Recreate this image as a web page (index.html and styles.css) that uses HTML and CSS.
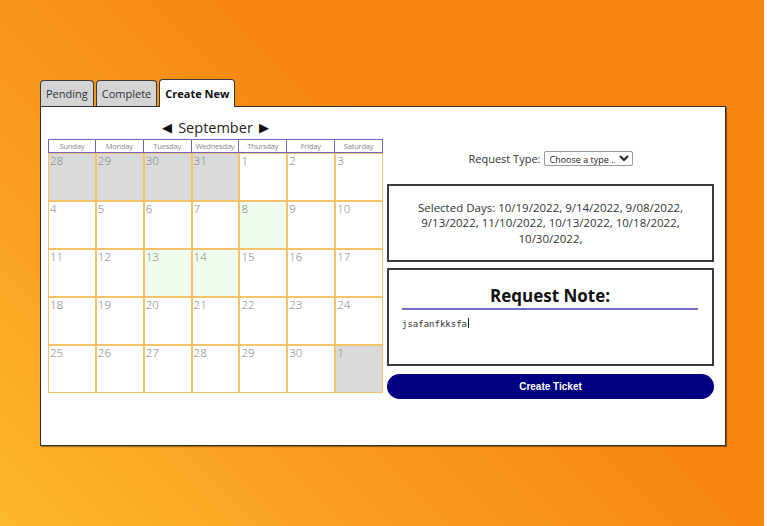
FILE: index.html
```html
<!DOCTYPE html>
<html lang="en">
<head>
    <meta charset="utf-8">
    <title>Tickets</title>
    <link rel="stylesheet" href="styles.css">
</head>
<body>
    <div class="screen">
        <div class="tabs">
            <button class="tab">Pending</button>
            <button class="tab">Complete</button>
            <button class="tab active">Create New</button>
        </div>

        <section class="panel">
            <!-- calendar -->
            <div class="calendar">
                <div class="month">
                    <span class="arrow">&#9664;</span>
                    <span class="month-name">September</span>
                    <span class="arrow">&#9654;</span>
                </div>
                <div class="weekdays">
                    <div class="weekday">Sunday</div>
                    <div class="weekday">Monday</div>
                    <div class="weekday">Tuesday</div>
                    <div class="weekday">Wednesday</div>
                    <div class="weekday">Thursday</div>
                    <div class="weekday">Friday</div>
                    <div class="weekday">Saturday</div>
                </div>
                <div class="days">
                    <div class="day other">28</div>
                    <div class="day other">29</div>
                    <div class="day other">30</div>
                    <div class="day other">31</div>
                    <div class="day">1</div>
                    <div class="day">2</div>
                    <div class="day">3</div>

                    <div class="day">4</div>
                    <div class="day">5</div>
                    <div class="day">6</div>
                    <div class="day">7</div>
                    <div class="day picked">8</div>
                    <div class="day">9</div>
                    <div class="day">10</div>

                    <div class="day">11</div>
                    <div class="day">12</div>
                    <div class="day picked">13</div>
                    <div class="day picked">14</div>
                    <div class="day">15</div>
                    <div class="day">16</div>
                    <div class="day">17</div>

                    <div class="day">18</div>
                    <div class="day">19</div>
                    <div class="day">20</div>
                    <div class="day">21</div>
                    <div class="day">22</div>
                    <div class="day">23</div>
                    <div class="day">24</div>

                    <div class="day">25</div>
                    <div class="day">26</div>
                    <div class="day">27</div>
                    <div class="day">28</div>
                    <div class="day">29</div>
                    <div class="day">30</div>
                    <div class="day other">1</div>
                </div>
            </div>

            <!-- request form -->
            <div class="request">
                <div class="type-row">
                    <label for="type">Request Type:</label>
                    <select id="type" class="type-select">
                        <option>Choose a type ...</option>
                    </select>
                </div>

                <div class="box selected">
                    Selected Days: 10/19/2022, 9/14/2022, 9/08/2022, 9/13/2022, 11/10/2022, 10/13/2022, 10/18/2022, 10/30/2022,
                </div>

                <div class="box note">
                    <div class="note-title">Request Note:</div>
                    <div class="note-text">jsafanfkksfa<span class="caret"></span></div>
                </div>

                <button class="create-btn">Create Ticket</button>
            </div>
        </section>
    </div>
</body>
</html>
```

FILE: styles.css
```css
/* base */
body {
    margin: 0;
    background: #ffffff;
    font-family: "Open Sans", "Noto Sans", sans-serif;
}

.screen {
    height: 526px;
    margin-right: 3px;
    padding: 79px 0 0 40px;
    box-sizing: border-box;
    background: linear-gradient(45deg, #fdb82c 0%, #f99c20 30%, #f7860f 60%, #f7850f 100%);
}

/* tabs */
.tabs {
    display: flex;
    align-items: flex-end;
    gap: 2px;
    height: 27px;
}

.tab {
    height: 26px;
    padding: 0 5px;
    border: 1px solid #3a3a3a;
    border-bottom: none;
    border-radius: 4px 4px 0 0;
    background: #d4d4d4;
    color: #333;
    font-family: "Open Sans", sans-serif;
    font-size: 11px;
    cursor: pointer;
}

.tab.active {
    height: 28px;
    position: relative;
    top: 1px;
    background: #fff;
    font-weight: 700;
    color: #111;
}

/* panel */
.panel {
    display: flex;
    width: 686px;
    height: 340px;
    box-sizing: border-box;
    border: 1px solid #2e2e2e;
    box-shadow: 1px 1px 1px rgba(0, 0, 0, 0.35);
    background: #fff;
    padding: 10px 0 0 7px;
}

/* calendar */
.calendar {
    width: 335px;
}

.month {
    display: flex;
    justify-content: center;
    align-items: center;
    gap: 6px;
    height: 20px;
    margin-bottom: 2px;
    color: #222;
}

.month-name {
    font-size: 14.5px;
}

.arrow {
    font-size: 13px;
    color: #111;
}

.weekdays,
.days {
    display: grid;
    grid-template-columns: repeat(7, 1fr);
}

.weekday {
    height: 12px;
    border: 1px solid #6c64c8;
    border-left-width: 0;
    font-size: 7.5px;
    line-height: 12px;
    text-align: center;
    color: #888;
    letter-spacing: -0.2px;
    overflow: hidden;
}

.weekday:first-child {
    border-left-width: 1px;
}

.day {
    height: 48px;
    box-sizing: border-box;
    border: 1px solid #f3c26a;
    padding: 0 1px;
    font-size: 11.5px;
    font-weight: 300;
    line-height: 14px;
    color: #7a7a7a;
}

.day.other {
    background: #dadada;
}

.day.picked {
    background: #effcef;
}

/* request side */
.request {
    width: 327px;
    margin-left: 4px;
    padding-top: 34px;
}

.type-row {
    display: flex;
    justify-content: center;
    align-items: center;
    gap: 3px;
    height: 14px;
    font-size: 11px;
    color: #333;
}

.type-select {
    width: 89px;
    height: 15px;
    padding: 0 1px;
    border: 1px solid #999;
    border-radius: 2px;
    background: #fff;
    font-family: "Open Sans", sans-serif;
    font-size: 9px;
    color: #222;
}

.box {
    box-sizing: border-box;
    border: 2px solid #3c3c3c;
}

.selected {
    display: flex;
    align-items: center;
    justify-content: center;
    height: 78px;
    margin-top: 19px;
    padding: 0 26px;
    text-align: center;
    font-size: 11.5px;
    line-height: 15.5px;
    color: #333;
}

.note {
    height: 98px;
    margin-top: 6px;
    padding: 15px 14px 0 13px;
}

.note-title {
    padding-bottom: 1px;
    border-bottom: 2px solid #6e6ec9;
    text-align: center;
    font-size: 17px;
    font-weight: 700;
    line-height: 22px;
    color: #111;
}

.note-text {
    margin-top: 8px;
    font-family: "DejaVu Sans Mono", monospace;
    font-size: 9px;
    color: #333;
}

.caret {
    display: inline-block;
    width: 1px;
    height: 10px;
    margin-left: 1px;
    vertical-align: -1px;
    background: #222;
}

.create-btn {
    display: block;
    width: 100%;
    height: 25px;
    margin-top: 8px;
    border: none;
    border-radius: 13px;
    background: #000080;
    color: #fff;
    font-family: "Liberation Sans", Arial, sans-serif;
    font-size: 10px;
    font-weight: 700;
    cursor: pointer;
}
```
